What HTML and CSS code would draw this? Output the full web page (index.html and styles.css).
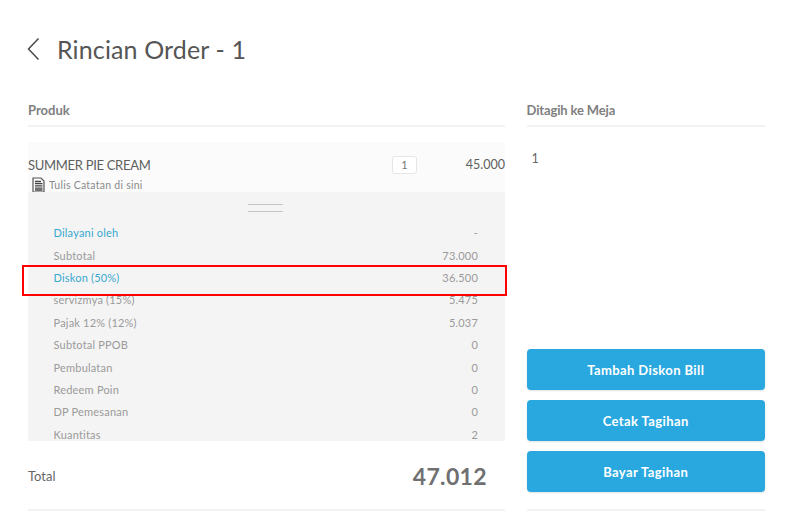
FILE: index.html
```html
<!DOCTYPE html>
<html lang="id">
<head>
<meta charset="utf-8">
<title>Rincian Order</title>
<link rel="stylesheet" href="styles.css">
</head>
<body>
<header class="page-head">
  <svg class="back" width="13" height="24" viewBox="0 0 13 24" aria-hidden="true"><path d="M11.5 1.500 1.500 12l10 10.500" fill="none" stroke="#4a4a4a" stroke-width="1.500"/></svg>
  <h1 class="title">Rincian Order - 1</h1>
</header>
<main class="columns">
  <section class="col-left">
    <h2 class="section-title">Produk</h2>
    <div class="item">
      <div class="item-row">
        <span class="item-name">SUMMER PIE CREAM</span>
        <span class="qty">1</span>
        <span class="item-price">45.000</span>
      </div>
      <div class="note">
        <svg width="13" height="16" viewBox="0 0 13 16" aria-hidden="true"><path d="M1 1h8l3 3v11H1z" fill="none" stroke="#555" stroke-width="1.200"/><path d="M3 4.500h6M3 6.700h7.500M3 8.900h7.500M3 11.100h7.500M3 13h7.500" stroke="#444" stroke-width="1.300"/></svg>
        <span>Tulis Catatan di sini</span>
      </div>
    </div>
    <div class="summary">
      <div class="handle"></div>
      <div class="row link"><span>Dilayani oleh</span><span class="val">-</span></div>
      <div class="row"><span>Subtotal</span><span class="val">73.000</span></div>
      <div class="row link"><span>Diskon (50%)</span><span class="val">36.500</span></div>
      <div class="row"><span>servizmya (15%)</span><span class="val">5.475</span></div>
      <div class="row"><span>Pajak 12% (12%)</span><span class="val">5.037</span></div>
      <div class="row"><span>Subtotal PPOB</span><span class="val">0</span></div>
      <div class="row"><span>Pembulatan</span><span class="val">0</span></div>
      <div class="row"><span>Redeem Poin</span><span class="val">0</span></div>
      <div class="row"><span>DP Pemesanan</span><span class="val">0</span></div>
      <div class="row"><span>Kuantitas</span><span class="val">2</span></div>
      <div class="highlight"></div>
    </div>
    <div class="total">
      <span class="total-label">Total</span>
      <span class="total-value">47.012</span>
    </div>
  </section>
  <aside class="col-right">
    <h2 class="section-title">Ditagih ke Meja</h2>
    <div class="table-no">1</div>
    <div class="actions">
      <button class="btn">Tambah Diskon Bill</button>
      <button class="btn">Cetak Tagihan</button>
      <button class="btn">Bayar Tagihan</button>
    </div>
  </aside>
</main>
</body>
</html>
```
FILE: styles.css
```css
* { box-sizing: border-box; }
html, body { margin: 0; height: 100%; }
body {
  width: 799px;
  height: 519px;
  overflow: hidden;
  background: #fff;
  font-family: "Lato", "Noto Sans", sans-serif;
  color: #666;
  padding: 37px 34px 0 27px;
}
.page-head { display: flex; align-items: center; height: 24px; gap: 17px; }
.back { display: block; flex: none; }
.title { margin: 0; font-size: 25px; font-weight: 400; color: #555; line-height: 24px; letter-spacing: .13px; }
.columns { display: flex; gap: 21.500px; margin: 27px 0 0 1px; }
.col-left { width: 477px; flex: none; }
.col-right { width: 238.500px; flex: none; display: flex; flex-direction: column; height: 423px; border-bottom: 2px solid #f2f2f2; }
.section-title {
  margin: 0;
  height: 39px;
  padding-top: 14px;
  font-size: 13px;
  line-height: 16px;
  font-weight: 700;
  color: #808080;
  border-bottom: 2px solid #f2f2f2;
}
.item { margin-top: 15px; height: 50px; background: #fbfbfb; padding-top: 14px; }
.item-row { display: flex; align-items: center; height: 17px; font-size: 13px; color: #5e5e5e; }
.item-name { width: 364px; letter-spacing: -.3px; }
.qty {
  width: 25px; height: 18px;
  border: 1px solid #e6e6e6; border-radius: 3px;
  background: #fff;
  text-align: center; font-size: 11px; line-height: 16px; color: #777;
}
.item-price { margin-left: auto; font-size: 12.500px; }
.note { display: flex; align-items: center; gap: 4px; margin: 4px 0 0 4px; font-size: 10.500px; color: #8a8a8a; letter-spacing: .25px; }
.note svg { display: block; flex: none; }
.summary { position: relative; height: 249px; background: #f4f4f4; overflow: visible; padding: 0 27px 0 25.500px; }
.handle { width: 35px; height: 8px; margin: 0 auto; position: relative; top: 12px; border-top: 1px solid #c6c6c6; border-bottom: 1px solid #c6c6c6; }
.row {
  display: flex; justify-content: space-between; align-items: center;
  height: 22.400px;
  font-size: 11px;
  letter-spacing: .2px;
  color: #9a9a9a;
  position: relative;
  top: 21.500px;
}
.row.link > span:first-child { color: #3aa9d0; }
.highlight { position: absolute; left: -6px; right: -2px; top: 73px; height: 31px; border: 2px solid #f00; }
.total { display: flex; justify-content: space-between; align-items: center; height: 70px; padding: 2px 18px 0 0; border-bottom: 2px solid #f2f2f2; }
.total-label { font-size: 13px; color: #666; }
.total-value { font-size: 23px; font-weight: 700; color: #707070; letter-spacing: .35px; }
.table-no { margin: 24px 0 0 5px; font-size: 12.500px; color: #666; line-height: 16px; }
.actions { margin-top: auto; display: flex; flex-direction: column; gap: 10px; padding-bottom: 17px; }
.col-right .section-title { letter-spacing: -.14px; }
.btn {
  height: 41px;
  border: 0;
  border-radius: 4px;
  background: #29a8e0;
  box-shadow: 0 1px 2px rgba(0,0,0,.12);
  color: #fff;
  font-family: inherit;
  font-size: 13px;
  font-weight: 700;
  letter-spacing: .4px;
}
```
